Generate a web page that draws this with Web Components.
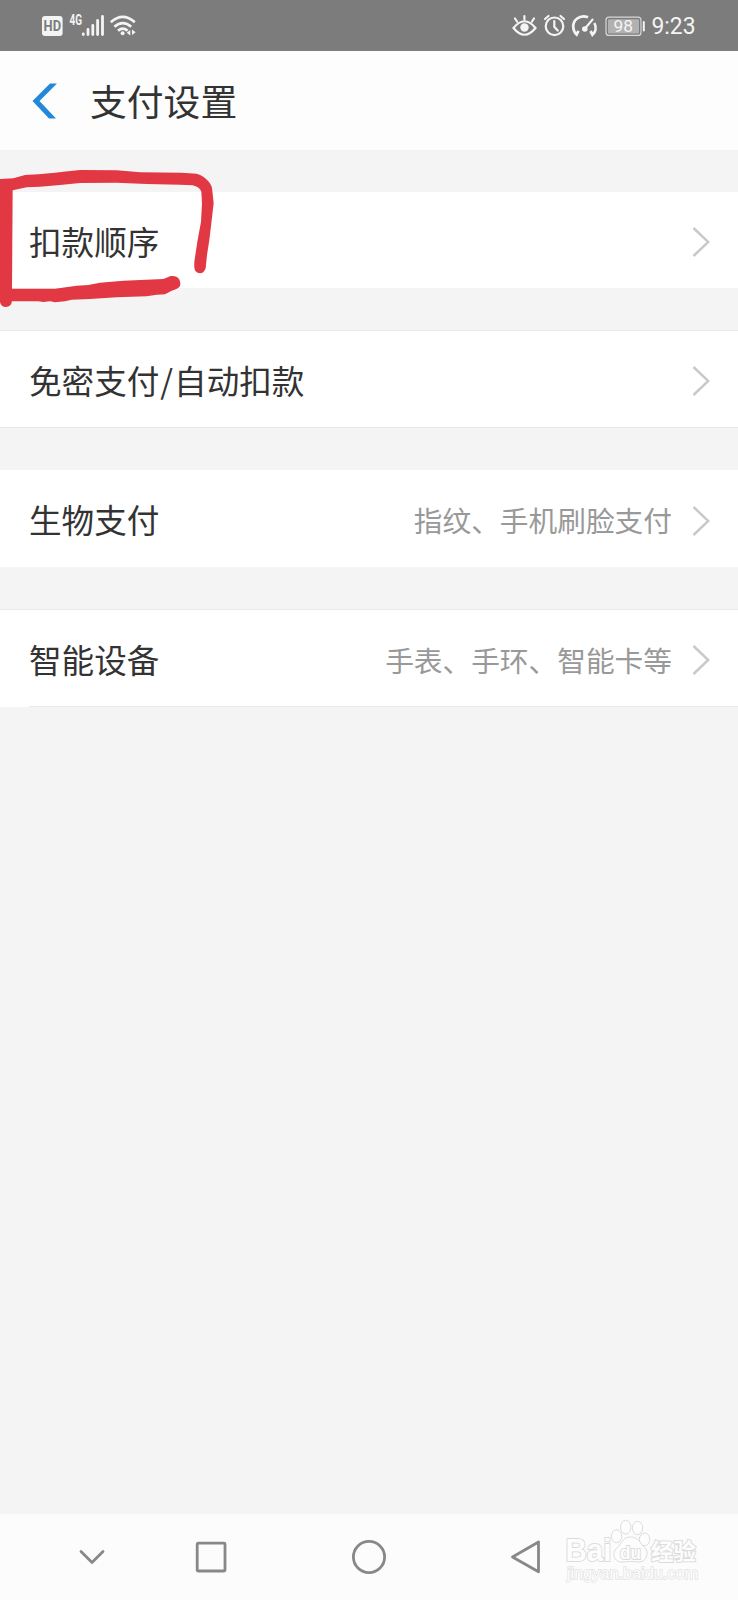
<!DOCTYPE html>
<html lang="zh-CN">
<head>
<meta charset="utf-8">
<title>支付设置</title>
<style>
  html,
  body {
    margin: 0;
    height: 100%;
  }

  body {
    overflow: hidden;
    font-family: "Noto Sans CJK SC", "Liberation Sans", sans-serif;
  }
</style>
</head>
<body>
<payment-settings></payment-settings>

<script>
/**
 * Creates a template from a string of markup.
 *
 * @param {string} html The markup.
 * @returns {HTMLTemplateElement} The template.
 */
function createTemplate (html) {
  const template = document.createElement('template')
  template.innerHTML = html
  return template
}

/**
 * Defines a custom element that only renders its template.
 *
 * @param {string} name The tag name.
 * @param {string} html The markup of the shadow root.
 */
function defineStatic (name, html) {
  const template = createTemplate(html)
  customElements.define(name, class extends HTMLElement {
    constructor () {
      super()
      this.attachShadow({ mode: 'open' })
        .appendChild(template.content.cloneNode(true))
    }
  })
}

// Status bar.
defineStatic('status-bar', `
  <style>
    :host {
      display: flex;
      justify-content: space-between;
      height: 51px;
      flex: none;
      box-sizing: border-box;
      padding: 0 42px 0 40px;
      background: #7c7c7c;
      color: #f4f4f4;
    }

    svg {
      display: block;
      height: 51px;
      fill: none;
      stroke: #f4f4f4;
      stroke-linecap: round;
    }

    text {
      font-family: Roboto, sans-serif;
      fill: #f4f4f4;
      stroke: none;
    }
  </style>
  <svg width="100" viewBox="40 0 100 51">
    <rect x="42" y="16" width="20.6" height="20" rx="3" fill="#f4f4f4" stroke="none"/>
    <text x="52.3" y="31.4" font-size="15" font-weight="700" text-anchor="middle" textLength="17.5" lengthAdjust="spacingAndGlyphs" style="fill:#7c7c7c">HD</text>
    <text x="69.5" y="24.8" font-size="13.8" font-weight="700" textLength="12.5" lengthAdjust="spacingAndGlyphs">4G</text>
    <path stroke-width="2.8" d="M83.3 34v.5M88 29.5v5M92.8 25.5v9M97.6 20.5v14M102.5 16.5v18"/>
    <path stroke-width="2.7" stroke-linecap="butt" d="M110.8 22.2Q122.8 11.4 134.8 22.2M114.4 26.8Q122.8 19.4 131.2 26.8M118 30.7Q122.8 26.5 127.6 30.7"/>
    <circle cx="122.6" cy="33.2" r="2" fill="#f4f4f4" stroke="none"/>
    <path fill="#f4f4f4" stroke="none" d="M130.3 30v5.5l-3.6-2.8zM132 29.5v5.5l3.6-2.7z"/>
  </svg>
  <svg width="186" viewBox="510 0 186 51">
    <path stroke-width="2.2" d="M513.5 28Q524.5 14.5 535.5 28Q524.5 41.5 513.5 28zM524.4 19.5V16M517 21.5l-2-3M532 21.5l2-3"/>
    <circle cx="524.5" cy="27.5" r="4.2" fill="#f4f4f4" stroke="none"/>
    <circle cx="554.5" cy="26.3" r="8.8" stroke-width="2.2"/>
    <path stroke-width="2.2" d="M554.3 21v5.8l3.4 3.8M545 19l3.5-3M564 19l-3.5-3"/>
    <path stroke-width="2.7" stroke-linecap="butt" d="M588 17.2C579.5 14 572.5 20.5 573.3 27.5C573.6 31 574.8 33 576.6 34.6L578.5 30.8M594.4 23C597 28 595.2 32.5 592.5 34.8L590.5 31"/>
    <circle cx="584.8" cy="29" r="2.8" fill="#f4f4f4" stroke="none"/>
    <path stroke-width="2" d="M585 28.5l7.6-9"/>
    <rect x="606" y="17.2" width="35" height="18.2" rx="3" stroke="#d8d8d8" stroke-width="1.2"/>
    <rect x="608" y="19.2" width="31" height="14.2" rx="1" fill="#b1b1b1" stroke="none"/>
    <path stroke-width="2" d="M643.8 22v8.5"/>
    <text x="623.3" y="32.1" font-size="17" text-anchor="middle" textLength="19.5" lengthAdjust="spacingAndGlyphs">98</text>
    <text x="651.5" y="34" font-size="23.5" textLength="44" lengthAdjust="spacingAndGlyphs">9:23</text>
  </svg>
`)

// Title bar with the back arrow.
defineStatic('title-bar', `
  <style>
    :host {
      display: flex;
      align-items: center;
      gap: 33px;
      flex: none;
      height: 99px;
      box-sizing: border-box;
      padding-left: 32px;
      background: #fdfdfd;
      color: #333;
      font-size: 36.8px;
      line-height: 52px;
    }

    .title {
      padding-bottom: 2px;
    }

    svg {
      display: block;
      fill: #2089db;
    }
  </style>
  <svg width="25" height="36" viewBox="0 0 25 36"><path d="M18 .5h7L7.5 18 24 35.5h-7L.5 18z"/></svg>
  <div class="title"><slot></slot></div>
`)

// One row of the list. The hint text goes in the "hint" slot.
defineStatic('setting-row', `
  <style>
    :host {
      display: flex;
      align-items: center;
      height: var(--row-height, 97px);
      box-sizing: border-box;
      padding: 3px 28px 0 29px;
      background: #fff;
      color: #333;
      font-size: 32.6px;
      line-height: 46px;
    }

    :host([lined]) {
      box-shadow: inset 0 1px #e9e9e9, inset 0 -1px #e9e9e9;
    }

    /* the last line starts at the label */
    :host([last]) {
      background: linear-gradient(#e9e9e9, #e9e9e9) 29px 100% / 100% 1px no-repeat #fff;
      box-shadow: inset 0 1px #e9e9e9;
    }

    .label {
      flex: 1;
      padding-bottom: 2px;
    }

    slot[name=hint] {
      color: #999;
      font-size: 28.7px;
    }

    svg {
      display: block;
      margin: 1px 0 0 20px;
      fill: none;
      stroke: #c9c9c9;
      stroke-width: 2.5;
    }
  </style>
  <div class="label"><slot></slot></div>
  <slot name="hint"></slot>
  <svg width="18" height="30" viewBox="0 0 18 30"><path d="M1.5 1L16.3 15 1.5 29"/></svg>
`)

// Hand-drawn mark round the first row.
defineStatic('pen-mark', `
  <style>
    :host {
      position: absolute;
      left: 0;
      top: 160px;
    }

    svg {
      display: block;
      fill: #e23843;
    }
  </style>
  <svg width="240" height="160" viewBox="0 0 720 480">
    <path d="M0 57L40 55L75 45L115 43L165 38L190 35L240 30L350 31L420 37L545 38L590 41Q612 48 625 64Q636 76 637 92L641 130L634 190L628 240L621 285L617 325Q612 340 600 340Q584 339 583 322Q582 306 585 292L592 245L603 185L606 130L604 95Q598 80 578 76L540 74L440 72L350 68L240 69L180 75L120 80L80 82L38 91L36 386H165L230 377L265 375L300 368L370 362L490 357L512 348Q530 346 537 357Q543 367 540 378Q534 388 515 392L495 403L470 404L440 409L350 412L270 417L215 419L195 424L165 427L150 424L130 426L115 424H36Q33 441 18 441Q3 441 0 426z"/>
  </svg>
`)

// System navigation at the bottom.
defineStatic('nav-bar', `
  <style>
    :host {
      display: flex;
      align-items: center;
      flex: none;
      height: 86px;
      box-sizing: border-box;
      padding-left: 78px;
      background: #fcfcfc;
    }

    svg {
      display: block;
      fill: none;
      stroke: #888;
      stroke-width: 2.8;
      stroke-linecap: round;
      stroke-linejoin: round;
    }

    .recent {
      margin-left: 89px;
    }

    .home {
      margin-left: 124px;
    }

    .back {
      margin-left: 123px;
    }
  </style>
  <svg width="28" height="16" viewBox="0 0 28 16"><path d="M3 2.5L14 13.5 25 2.5"/></svg>
  <svg class="recent" width="32" height="32" viewBox="0 0 32 32"><rect x="2.2" y="2.2" width="27.8" height="27.8" rx="1"/></svg>
  <svg class="home" width="36" height="36" viewBox="0 0 36 36"><circle cx="18" cy="18" r="15.6"/></svg>
  <svg class="back" width="32" height="36" viewBox="0 0 32 36"><path d="M28.5 3L2.5 18l26 14.8z"/></svg>
`)

// Watermark over the navigation bar.
defineStatic('water-mark', `
  <style>
    :host {
      position: absolute;
      left: 560px;
      top: 1514px;
    }

    svg {
      display: block;
      fill: #fdfdfd;
      stroke: #dcdcdc;
      stroke-width: 1;
    }

    text {
      font-family: "Liberation Sans", "Noto Sans CJK SC", sans-serif;
      font-weight: 700;
      paint-order: stroke;
      stroke-width: 2;
    }

    .address {
      font-weight: 400;
      stroke: #e2e2e2;
      stroke-width: 1.4;
    }
  </style>
  <svg width="150" height="76" viewBox="560 1514 150 76">
    <text x="565.5" y="1561" font-size="31" textLength="46" lengthAdjust="spacingAndGlyphs">Bai</text>
    <ellipse cx="616.6" cy="1536.3" rx="5.2" ry="6.4"/>
    <ellipse cx="625.7" cy="1527.2" rx="5.2" ry="6.8"/>
    <ellipse cx="637.5" cy="1528" rx="5.2" ry="6.6"/>
    <ellipse cx="644.6" cy="1539.4" rx="5.2" ry="6.4"/>
    <path d="M630.5 1537C639 1537 640.5 1544 644.5 1547.5C650 1552 646.5 1563 638 1562C633 1561.3 628 1561.3 623 1562C614 1563 611 1552.5 617 1548C621.5 1544.5 622 1537 630.5 1537z"/>
    <text x="620" y="1558.5" font-size="19" textLength="21" lengthAdjust="spacingAndGlyphs">du</text>
    <text x="651" y="1560" font-size="22.5" textLength="45" lengthAdjust="spacingAndGlyphs">经验</text>
    <text class="address" x="567" y="1579" font-size="16" textLength="131" lengthAdjust="spacingAndGlyphs">jingyan.baidu.com</text>
  </svg>
`)

// The whole page.
defineStatic('payment-settings', `
  <style>
    :host {
      display: flex;
      flex-direction: column;
      position: relative;
      width: 738px;
      height: 1600px;
      background: #f4f4f4;
    }

    main {
      flex: 1;
      display: flex;
      flex-direction: column;
      gap: 42px;
      padding-top: 42px;
    }

    setting-row:first-child {
      --row-height: 96px;
    }

    setting-row[lined],
    setting-row[last] {
      --row-height: 98px;
    }

    .slash {
      padding: 0 1px;
    }
  </style>
  <status-bar></status-bar>
  <title-bar>支付设置</title-bar>
  <main>
    <setting-row>扣款顺序</setting-row>
    <setting-row lined>免密支付<span class="slash">/</span>自动扣款</setting-row>
    <setting-row>生物支付<span slot="hint">指纹、手机刷脸支付</span></setting-row>
    <setting-row last>智能设备<span slot="hint">手表、手环、智能卡等</span></setting-row>
  </main>
  <nav-bar></nav-bar>
  <pen-mark></pen-mark>
  <water-mark></water-mark>
`)
</script>
</body>
</html>
